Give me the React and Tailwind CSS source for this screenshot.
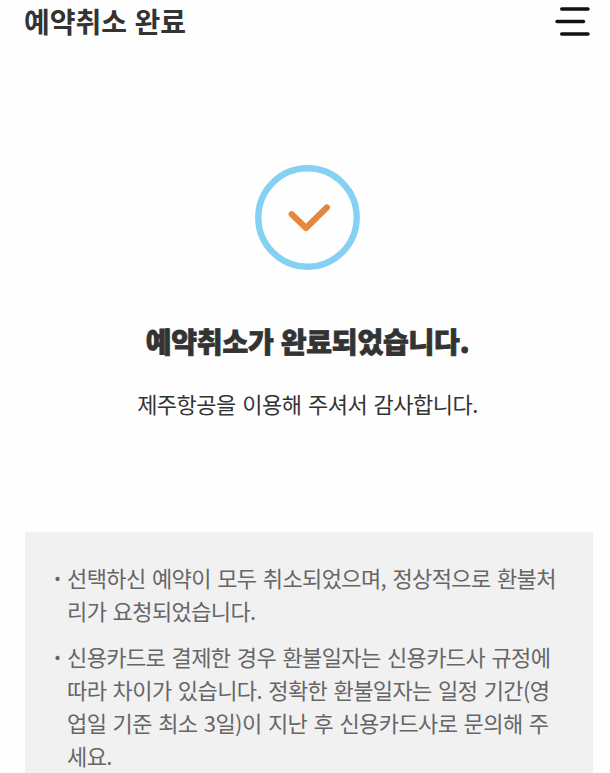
import React from 'react';

const notices = [
  ['선택하신 예약이 모두 취소되었으며, 정상적으로 환불처', '리가 요청되었습니다.'],
  [
    '신용카드로 결제한 경우 환불일자는 신용카드사 규정에',
    '따라 차이가 있습니다. 정확한 환불일자는 일정 기간(영',
    '업일 기준 최소 3일)이 지난 후 신용카드사로 문의해 주',
    '세요.',
  ],
];

const MenuIcon = () => (
  <svg width="36" height="32" viewBox="0 0 36 32" fill="none" stroke="#111111" strokeWidth="3.4" strokeLinecap="round">
    <path d="M6.7 3H33" />
    <path d="M2 15.5H28.5" />
    <path d="M6.7 28H33" />
  </svg>
);

const CompleteIcon = () => (
  <svg width="106" height="106" viewBox="0 0 106 106" fill="none">
    <circle cx="52.5" cy="52.5" r="49.2" stroke="#84d1f4" strokeWidth="6.4" />
    <path d="M36.7 49.2L51 63L71.8 42.5" stroke="#e8873a" strokeWidth="6.2" strokeLinecap="round" strokeLinejoin="round" />
  </svg>
);

const NoticeItem = ({ lines }) => (
  <li className="flex">
    <span className="w-[17px] shrink-0 pl-px font-bold">·</span>
    <p>
      {lines.map((line) => (
        <span key={line} className="block whitespace-nowrap">{line}</span>
      ))}
    </p>
  </li>
);

const App = () => {
  return (
    <div className="flex h-[773px] w-[610px] flex-col overflow-hidden bg-[#fefefe] font-['Noto_Sans_CJK_KR',sans-serif] text-[#333333]">
      <header className="flex h-11 items-center justify-between pr-[19px] pl-6">
        <h1 className="pb-[2px] text-[28px] leading-[40px] font-bold [word-spacing:1px]">예약취소 완료</h1>
        <button type="button" aria-label="메뉴">
          <MenuIcon />
        </button>
      </header>

      <main className="flex flex-1 flex-col">
        <section className="flex h-[488px] flex-col items-center pt-[121px] pl-[5px]">
          <CompleteIcon />
          <h2 className="mt-[50px] text-[28px] leading-10 font-black tracking-[-0.2px] whitespace-nowrap [word-spacing:1px] [-webkit-text-stroke:0.8px_#333333]">
            예약취소가 완료되었습니다.
          </h2>
          <p className="mt-[26px] text-[22px] leading-8 tracking-[-0.5px] whitespace-nowrap [word-spacing:2px]">
            제주항공을 이용해 주셔서 감사합니다.
          </p>
        </section>

        <section className="mr-[17px] ml-[25px] flex-1 bg-[#f1f1f1] pt-[29px] pl-[25px]">
          <ul className="flex flex-col gap-[13px] text-[22px] leading-[33px] tracking-[-0.6px] text-[#666666] [word-spacing:2px]">
            {notices.map((lines) => (
              <NoticeItem key={lines[0]} lines={lines} />
            ))}
          </ul>
        </section>
      </main>
    </div>
  );
};

export default App;
